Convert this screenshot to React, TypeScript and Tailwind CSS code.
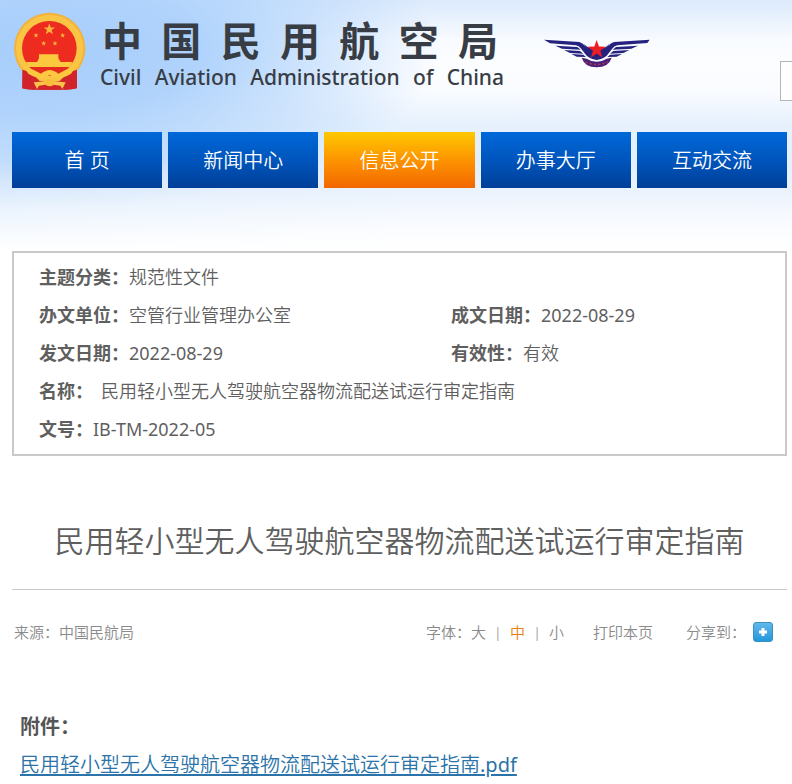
import React from "react";

const NAV = [
  { label: "首 页" },
  { label: "新闻中心" },
  { label: "信息公开", active: true },
  { label: "办事大厅" },
  { label: "互动交流" },
];

const TITLE = "民用轻小型无人驾驶航空器物流配送试运行审定指南";

const STAR = "0,-10 2.4,-3.2 9.5,-3.1 3.8,1.2 5.9,8.1 0,4 -5.9,8.1 -3.8,1.2 -9.5,-3.1 -2.4,-3.2";

function Emblem() {
  return (
    <svg viewBox="35 30 225 240" className="h-20 w-[75px] shrink-0" aria-hidden="true">
      <path d="M68 190 L66 262 Q80 266 100 266 L192 266 Q214 266 228 262 L228 190 Z" fill="#d2232a" />
      <circle cx="148" cy="142" r="107" fill="#f3b23c" />
      <circle cx="148" cy="142" r="101" fill="#f9c544" />
      <path d="M66 206 Q92 210 116 238 L104 266 Q76 266 66 262 Z" fill="#d2232a" />
      <path d="M230 206 Q204 210 180 238 L192 266 Q218 266 230 262 Z" fill="#d2232a" />
      <circle cx="147" cy="142" r="82" fill="#ee2b1f" />
      <path d="M76 183 H217 L208 198 H85 Z M110 183 L116 172 V160 H174 V172 L181 183 Z" fill="#fcc83e" />
      <path d="M88 198 H206 Q190 214 170 220 L148 206 L124 220 Q104 214 88 198 Z" fill="#e52a1e" />
      <path d="M70 198 Q98 204 122 218 Q136 207 148 207 Q160 207 174 218 Q198 204 226 198 L212 218 Q190 232 166 232 L148 221 L130 232 Q106 232 84 218 Z" fill="#fbc840" />
      <path d="M104 236 Q148 250 192 236 L186 266 H110 Z" fill="#d2232a" />
      <ellipse cx="148" cy="245" rx="15" ry="11" fill="#f9bd3a" />
      <path d="M100 244 L136 241 V251 L116 254 L110 264 Z M196 244 L160 241 V251 L180 254 L186 264 Z" fill="#f9c548" />
      <g fill="#fbb53d">
        <polygon points={STAR} transform="translate(147 85) scale(1.8)" />
        <polygon points={STAR} transform="translate(107 103) scale(0.8)" />
        <polygon points={STAR} transform="translate(187 103) scale(0.8)" />
        <polygon points={STAR} transform="translate(130 127) scale(0.8)" />
        <polygon points={STAR} transform="translate(164 127) scale(0.8)" />
      </g>
    </svg>
  );
}

function Wings() {
  return (
    <svg viewBox="45 115 324 96" className="h-8 w-[108px] shrink-0" aria-hidden="true">
      <g fill="#26237f">
        <path d="M48 120 L154 127 Q164 129 172 140 L186 162 Q206 180 226 162 L240 140 Q248 129 258 127 L365 120 L358 130 L268 137 Q258 139 252 148 L236 168 Q206 192 176 168 L160 148 Q154 139 144 137 L66 131 Z" />
        <path d="M82 138 L148 142 L158 150 L102 147 Z M108 151 L156 154 L166 162 L126 160 Z M130 163 L166 165 L174 172 L146 171 Z" />
        <path d="M330 138 L264 142 L254 150 L310 147 Z M304 151 L256 154 L246 162 L286 160 Z M282 163 L246 165 L238 172 L266 171 Z" />
        <path d="M168 132 Q178 144 186 144 H226 Q234 144 244 132 L230 164 L206 182 L182 164 Z" />
      </g>
      <path d="M161 174 L176 177 Q206 196 236 177 L251 174 Q242 203 206 203 Q170 203 161 174 Z" fill="#4a2277" />
      <path d="M172 187 Q206 202 240 187" fill="none" stroke="#b5305f" strokeWidth="4" strokeDasharray="7 6" />
      <polygon points={STAR} transform="translate(206 150) scale(2.9)" fill="#ee1c25" />
    </svg>
  );
}

const LATIN_ONLY = /^[\x20-\x7e]+$/;

function Field({ label, value, className = "" }: { label: string; value: string; className?: string }) {
  return (
    <div className={`flex ${className}`}>
      <dt className="font-bold">{label}</dt>
      <dd className={LATIN_ONLY.test(value) ? "font-normal" : ""}>{value}</dd>
    </div>
  );
}

export default function App() {
  return (
    <div className="min-h-screen overflow-hidden bg-white font-['Noto_Sans','Noto_Sans_CJK_SC',sans-serif] text-[#5f5f5f]">
      <div className="bg-[linear-gradient(to_bottom,transparent_65%,white_100%),radial-gradient(ellipse_400px_160px_at_40px_50px,#a6cdfb_0%,#b0d3fc_40%,transparent_100%),linear-gradient(to_right,#c4defb80_0px,transparent_420px),linear-gradient(to_bottom,#dceafc_0px,#f8fbff_40px,#fcfdff_60px,#fafcff_90px,#e6f1fd_125px,#e2edfc_195px,#f4f8ff_250px)] pb-[63px] pl-3 pr-[5px]">
        <header className="flex h-[132px] items-start">
          <div className="mt-[11px]">
            <Emblem />
          </div>
          <div className="ml-[13px] mt-[17px] w-[404px] shrink-0 text-[#383d45]">
            <h1 className="whitespace-nowrap pl-[2px] pr-[6px] text-[40px] font-bold leading-[48px] [text-align-last:justify]">中国民用航空局</h1>
            <p className="whitespace-nowrap text-[21px] font-medium leading-6 [text-align-last:justify]">Civil Aviation Administration of China</p>
          </div>
          <div className="ml-[39px] mt-[38px]">
            <Wings />
          </div>
          <input aria-label="搜索" className="ml-[129px] mt-[61px] h-10 w-60 shrink-0 border border-[#b5b5b5] bg-white px-2" />
        </header>
        <nav className="flex gap-[6px]">
          {NAV.map((item) => (
            <a
              key={item.label}
              href="#"
              className={`flex h-14 flex-1 items-center justify-center whitespace-pre pt-[2px] text-xl font-[350] text-white ${
                item.active
                  ? "bg-linear-to-b from-[#fdc800] via-[#fd9400] to-[#f26600]"
                  : "bg-linear-to-b from-[#0068d8] via-[#0055bd] to-[#003f98]"
              }`}
            >
              {item.label}
            </a>
          ))}
        </nav>
      </div>
      <main className="pl-3 pr-[5px] font-[350]">
        <dl className="grid grid-cols-[4fr_3fr] border-2 border-[#c9c9c9] bg-white px-[25px] pb-[6px] pt-[5px] text-[18px] leading-[38px]">
          <Field label="主题分类：" value="规范性文件" className="col-span-2" />
          <Field label="办文单位：" value="空管行业管理办公室" />
          <Field label="成文日期：" value="2022-08-29" />
          <Field label="发文日期：" value="2022-08-29" />
          <Field label="有效性：" value="有效" />
          <Field label="名称：" value={TITLE} className="col-span-2 gap-2" />
          <Field label="文号：" value="IB-TM-2022-05" className="col-span-2" />
        </dl>
        <h2 className="border-b border-[#c9c9c9] pb-[26px] pt-[62px] text-center text-[30px] font-[350] leading-[45px]">{TITLE}</h2>
        <div className="flex items-center px-[2px] pt-8 text-[15px] leading-5 text-[#8a8a8a]">
          <p>来源：中国民航局</p>
          <div className="ml-auto flex items-center">
            <span>字体：</span>
            <button type="button">大</button>
            <span className="w-6 text-center">|</span>
            <button type="button" className="text-[#e8820c]">中</button>
            <span className="w-6 text-center">|</span>
            <button type="button">小</button>
          </div>
          <button type="button" className="ml-[29px]">打印本页</button>
          <span className="ml-[33px]">分享到：</span>
          <button type="button" aria-label="分享" className="ml-[7px] mr-3 flex size-5 items-center justify-center rounded-[3px] border border-[#3d8fc0] bg-linear-to-b from-[#5fb9ea] to-[#1f97dc]">
            <svg viewBox="0 0 8 8" className="size-2" aria-hidden="true">
              <path d="M4 0V8M0 4H8" stroke="white" strokeWidth="3" />
            </svg>
          </button>
        </div>
        <section className="px-2 pt-[66px] text-xl leading-[38px]">
          <h3 className="font-bold text-[#555]">附件：</h3>
          <a href="#" className="text-[#2b73a8] underline decoration-2 underline-offset-2">
            {TITLE}
            <span className="font-normal">.pdf</span>
          </a>
        </section>
      </main>
    </div>
  );
}
